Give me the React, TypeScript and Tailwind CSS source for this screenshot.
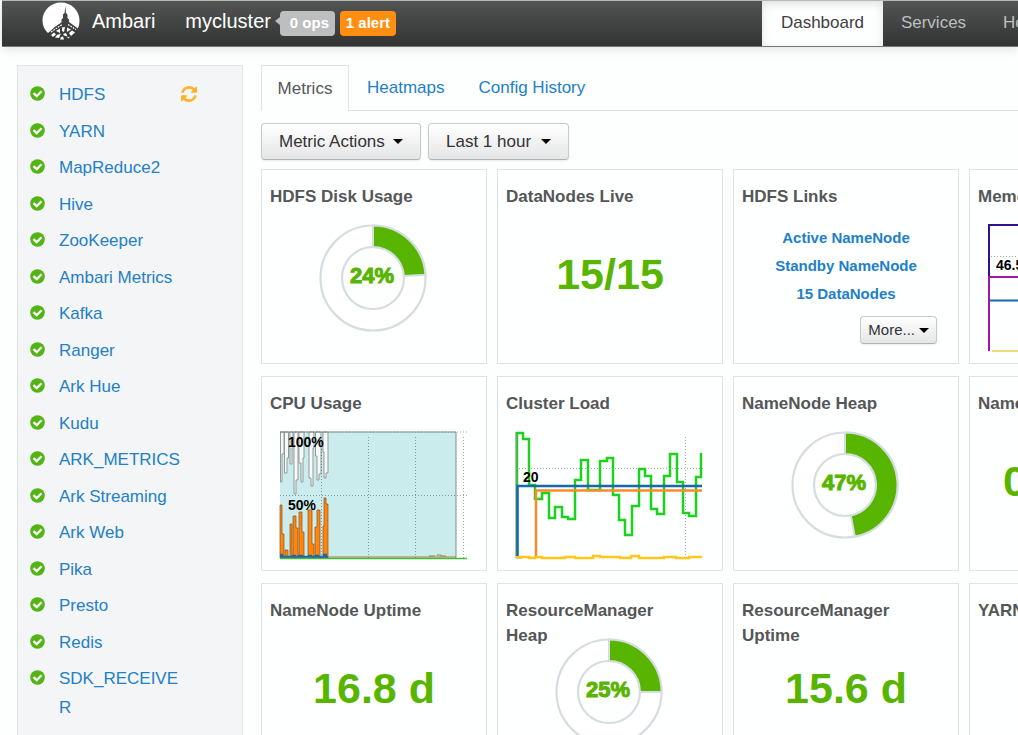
import React from "react";

const services = [
  "HDFS", "YARN", "MapReduce2", "Hive", "ZooKeeper", "Ambari Metrics", "Kafka", "Ranger", "Ark Hue",
  "Kudu", "ARK_METRICS", "Ark Streaming", "Ark Web", "Pika", "Presto", "Redis", "SDK_RECEIVER",
];

function Logo() {
  return (
    <svg width="38" height="38" viewBox="0 0 38 38" aria-hidden="true">
      <path d="M19 .5C8.800 .5 .5 8.500 .5 18.500C.5 23.500 2.500 28 6 31L13 25L20.500 20L26 20L35.500 27C37 24.500 37.500 21.500 37.500 18.500C37.500 8.500 29.200 .5 19 .5Z" fill="#fff" />
      <path d="M23.300 4L24 11L25.500 12.500V16L27 17.500V20L36 26.500L34.500 29L26 24H21L8 32.500L6 31.500L13 25L19.500 20.500V17.500L21 16V12.500L22.600 11Z" fill="#414343" />
      <path d="M9 30L20 22.500M26 22.500L34 27.500" fill="none" stroke="#fff" strokeWidth="1.100" strokeDasharray="1.800 1" />
      <path d="M9 33L12 30.500L14 32.500L11 35ZM14 29L18 26.500V31ZM20 25.500L23 25L22 30L20 29ZM25 25.500L29 27.500L25 30ZM15 33L19 31.500L17 36L13 35.500ZM21 32L24 31L25.500 34.500L22 33.500ZM27 31L30 28.500L33 30.500L29 34ZM19 35L21 34.500L22 37.500H18ZM25 35.500L28 34.500L26.500 36.500Z" fill="#fff" />
    </svg>
  );
}

function CheckIcon() {
  return (
    <svg className="mt-1.5 shrink-0" width="15" height="15" viewBox="0 0 15 15" aria-hidden="true">
      <circle cx="7.500" cy="7.500" r="7.300" fill="#52b415" />
      <path d="M3.500 7.200L6.700 10.200L11.500 5.300" fill="none" stroke="#fff" strokeWidth="2.300" />
    </svg>
  );
}

function RefreshIcon() {
  return (
    <svg width="16" height="16" viewBox="0 0 1536 1536" fill="#fbb32d" aria-hidden="true">
      <path d="M1511 928q0 5-1 7-64 268-268 434.500T764 1536q-146 0-282.500-55T238 1324l-129 129q-19 19-45 19t-45-19-19-45V960q0-26 19-45t45-19h448q26 0 45 19t19 45-19 45l-137 137q71 66 161 102t187 36q134 0 250-65t186-179q11-17 53-117 8-23 30-23h192q13 0 22.500 9.500t9.500 22.500zM1536 128v448q0 26-19 45t-45 19h-448q-26 0-45-19t-19-45 19-45l138-138Q969 256 768 256q-134 0-250 65T332 500q-11 17-53 117-8 23-30 23H50q-13 0-22.500-9.500T18 608v-7q65-268 270-434.500T768 0q146 0 284 55.500T1297 212l130-129q19-19 45-19t45 19 19 45z" />
    </svg>
  );
}

function Caret() {
  return <span className="border-x-5 border-t-5 border-x-transparent border-t-black" />;
}

const buttonStyle =
  "flex items-center rounded-[4px] border border-[#c9caca] border-b-[#b0b1b2] bg-linear-to-b from-white to-[#e5e6e7] text-[#333] shadow-[0_1px_2px_rgba(0,0,0,0.08)]";

function Card({ title, children }: { title: string; children?: React.ReactNode }) {
  return (
    <section className="relative h-[195px] overflow-hidden border border-[#dfe3e4] bg-white/60">
      <h2 className="w-[200px] px-2 pt-[14px] text-[17px] leading-[25px] font-bold text-[#545657]">{title}</h2>
      {children}
    </section>
  );
}

function Donut({ percent }: { percent: number }) {
  const a = (percent / 100) * 2 * Math.PI;
  const at = (r: number) => `${54 + r * Math.sin(a)} ${54 - r * Math.cos(a)}`;
  return (
    <svg className="absolute top-[54px] left-[57px]" width="108" height="108" viewBox="0 0 108 108">
      <circle cx="54" cy="54" r="52.500" fill="#fff" stroke="#d5dde0" strokeWidth="2.200" />
      <circle cx="54" cy="54" r="31" fill="#fdfefe" stroke="#d5dde0" strokeWidth="2.200" />
      <path d={`M54 1.500A52.500 52.500 0 0 1 ${at(52.5)}L${at(31)}A31 31 0 0 0 54 23Z`} fill="#57b500" stroke="#d5dde0" strokeWidth="2" />
      <text x="53" y="59" textAnchor="middle" fontSize="22" fontWeight="bold" fill="#57b500" stroke="#57b500" strokeWidth="1">{percent}%</text>
    </svg>
  );
}

function BigValue({ children }: { children: string }) {
  return <p className="absolute inset-x-0 top-[80px] text-center text-[43px] leading-[48px] font-bold whitespace-nowrap text-[#57b500]">{children}</p>;
}

const chartLabel = { fontSize: 14, fontWeight: "bold", fill: "#000" } as const;
const grid = { stroke: "#000", strokeOpacity: 0.35, strokeDasharray: "1 2", fill: "none" } as const;

function CpuChart() {
  return (
    <svg className="absolute top-[53px] left-4" width="192" height="132" viewBox="0 0 192 132">
      <path d="M2 2H178V128H2Z" fill="#cbeced" />
      <path d="M2.500 2V52H4V24H6V2ZM6.500 2V43H9V28H10.500V2ZM12 2V34H14V18H15V2ZM16 18V64H18V50H20V2H16ZM21 2V33H23V52H25V28H26V2ZM31 2V48H33V56H35V18H36V2ZM37.500 2V26H39V50H41V44H43V2ZM45 2V22H46V48H48V43H50V2Z" fill="#f8fafa" stroke="#929999" strokeWidth="1" />
      <path d="M2 128V75H4V104H6V126H7V120H10V128H12V94H14V126H15V86H18V98H20V126H21V82H24V102H26V128H30V80H34V114H36V128H37V97H39V80H42V128H45V96H46V68H48V74H50V128Z" fill="#ff850c" stroke="#8b5420" strokeWidth=".700" />
      <path d="M2 127H50M2 125H5M14 126H18M20 126H25M30 126H34M37 126H41M45 125H49" stroke="#2367a3" strokeWidth="2.500" />
      <path d="M2 2H189M2 65.500H189M43.500 7V128M90.500 7V128M137.500 7V128M185.500 7V128" {...grid} />
      <path d="M2 2H178V128" fill="none" stroke="#858b8b" />
      <path d="M50 127H178M151 126H157M159 126V125H163V126H168" fill="none" stroke="#a77c38" />
      <path d="M2 128.500H189" stroke="#47bc39" strokeWidth="1.500" />
      <text x="10" y="17" {...chartLabel}>100%</text>
      <text x="10" y="80" {...chartLabel}>50%</text>
    </svg>
  );
}

function LoadChart() {
  return (
    <svg className="absolute top-[53px] left-4" width="192" height="132" viewBox="0 0 192 132">
      <path d="M2 38.500H189M171.500 7V128" {...grid} />
      <path d="M3 126V3H9V9H15V55H21V69H28V63H35V88H41V77H48V87H54V89H61V50H67V30H74V60H86V31H93V28H99V65H105V90H111V105H118V76H125V39H131V46H137V79H143V84H150V46H156V24H163V52H169V83H175V86H182V47H187V23" fill="none" stroke="#1ed11e" strokeWidth="2.500" />
      <path d="M2 2V128H8" fill="none" stroke="#8b9393" />
      <path d="M2 127H15V128H21V127H28V128H51V127H61V128H79V126H86V127H106V128H117V126H125V128H150V127H162V128H175V127H188" fill="none" stroke="#ffc719" strokeWidth="2.500" />
      <path d="M22 126V60.500H188" fill="none" stroke="#f98c2b" strokeWidth="2.500" />
      <path d="M3.500 126V56H188" fill="none" stroke="#1769ad" strokeWidth="2.500" />
      <text x="9" y="52" {...chartLabel}>20</text>
    </svg>
  );
}

function MemoryChart() {
  return (
    <svg className="absolute top-[53px] left-4" width="192" height="132" viewBox="0 0 192 132">
      <path d="M2 33.500H189" {...grid} />
      <path d="M3 128V2H189" fill="none" stroke="#32108e" strokeWidth="2" />
      <path d="M3 128V54H189" fill="none" stroke="#a317a0" strokeWidth="2" />
      <path d="M3 77.500H189" stroke="#1769ad" strokeWidth="2" />
      <path d="M6 128H189" stroke="#ead981" strokeWidth="2" />
      <text x="10" y="47" {...chartLabel}>46.5</text>
    </svg>
  );
}

export default function App() {
  return (
    <div className="h-screen overflow-hidden bg-[#fdfefe] pl-0.5 font-['Liberation_Sans',Arial,sans-serif] text-[17px]">
      <header className="flex h-[47px] overflow-hidden border-t border-b border-t-[#b5b8b8] border-b-[#777] bg-linear-to-b from-[#535555] to-[#323333] shadow-[0_2px_10px_rgba(0,0,0,0.12)]">
        <a href="#" className="ml-10 flex h-10 items-center text-[20px] text-white">
          <Logo />
          <span className="ml-3">Ambari</span>
        </a>
        <div className="ml-[30px] flex h-10 grow items-center text-[20px] text-white">
          <span>mycluster</span>
          <span className="ml-1 border-y-4 border-r-5 border-y-transparent border-r-[#bdbebf]" />
          <button className="mt-1 h-[25px] w-[55px] rounded-[4px] bg-[#bdbebf] pl-1 text-[15px] font-bold">0 ops</button>
          <button className="mt-1 ml-[5px] h-[25px] w-[56px] rounded-[4px] bg-[#ff8e11] text-[15px] font-bold">1 alert</button>
        </div>
        <nav className="flex w-[256px] shrink-0 text-[17px] leading-[43px] whitespace-nowrap text-[#bebfbf]">
          <a href="#" className="w-[121px] shrink-0 bg-[#fdfefe] text-center text-[#3e4041] shadow-[inset_0_3px_8px_rgba(0,0,0,0.12)]">Dashboard</a>
          <a href="#" className="w-[101px] shrink-0 text-center">Services</a>
          <a href="#" className="ml-[19px]">Hosts</a>
        </nav>
      </header>

      <div className="flex items-start gap-[18px] pt-[18px] pl-[15px]">
        <aside className="w-[226px] shrink-0 border border-[#e1e4e5] bg-[#f4f5f7] pt-[14px] pb-4 pl-3">
          <ul>
            {services.map((name) => (
              <li key={name} className="flex odd:mb-2 even:mb-[7px]">
                <CheckIcon />
                <a href="#" className="ml-[14px] w-[122px] leading-[29px] break-all text-[#2380c5]">{name}</a>
                {name === "HDFS" && <span className="mt-[6px]"><RefreshIcon /></span>}
              </li>
            ))}
          </ul>
        </aside>

        <main className="min-w-0 grow">
          <div className="flex h-[46px] text-[17px] leading-[45px] text-[#1d80c8]">
            <a href="#" className="w-[88px] border border-b-0 border-[#dfe3e4] text-center text-[#545657]">Metrics</a>
            <div className="flex grow gap-[34px] border-b border-[#dfe3e4] pl-[18px]">
              <a href="#">Heatmaps</a>
              <a href="#">Config History</a>
            </div>
          </div>
          <div className="mt-3 flex gap-[7px]">
            <button className={`${buttonStyle} h-[37px] w-[160px] justify-between px-[17px]`}>Metric Actions <Caret /></button>
            <button className={`${buttonStyle} h-[37px] w-[141px] justify-between px-[17px]`}>Last 1 hour <Caret /></button>
          </div>

          <div className="mt-[9px] grid grid-cols-[repeat(4,226px)] gap-x-[10px] gap-y-3">
            <Card title="HDFS Disk Usage"><Donut percent={24} /></Card>
            <Card title="DataNodes Live"><BigValue>15/15</BigValue></Card>
            <Card title="HDFS Links">
              <div className="mt-[15px] flex flex-col items-center text-[15px] leading-[28px] font-bold text-[#1d80c8]">
                <a href="#">Active NameNode</a>
                <a href="#">Standby NameNode</a>
                <a href="#">15 DataNodes</a>
              </div>
              <button className={`${buttonStyle} mt-2 mr-[21px] ml-auto h-[28px] gap-1 px-[7px] text-[15px]`}>More... <Caret /></button>
            </Card>
            <Card title="Memory Usage"><MemoryChart /></Card>
            <Card title="CPU Usage"><CpuChart /></Card>
            <Card title="Cluster Load"><LoadChart /></Card>
            <Card title="NameNode Heap"><Donut percent={47} /></Card>
            <Card title="NameNode RPC"><BigValue>0.14 ms</BigValue></Card>
            <Card title="NameNode Uptime"><BigValue>16.8 d</BigValue></Card>
            <Card title="ResourceManager Heap"><Donut percent={25} /></Card>
            <Card title="ResourceManager Uptime"><BigValue>15.6 d</BigValue></Card>
            <Card title="YARN Memory" />
          </div>
        </main>
      </div>
    </div>
  );
}
